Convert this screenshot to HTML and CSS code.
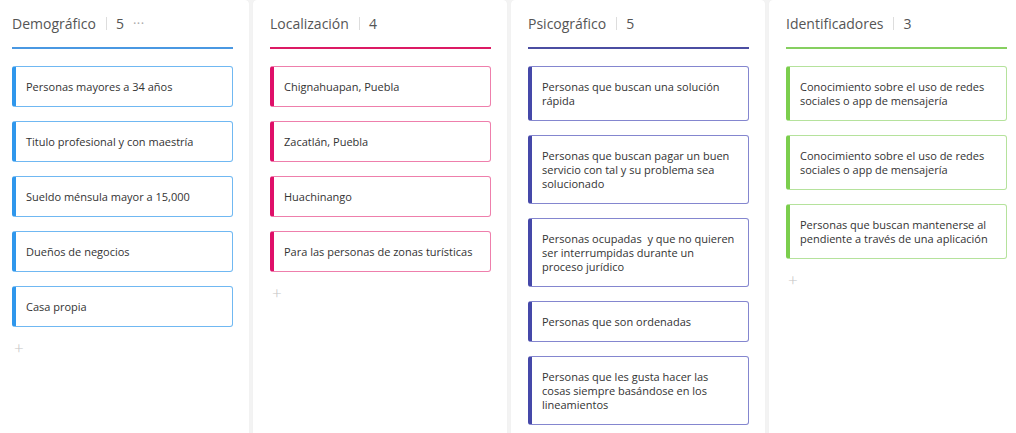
FILE: index.html
```html
<!DOCTYPE html>
<html lang="es">
<head>
<meta charset="utf-8">
<link rel="stylesheet" href="styles.css">
</head>
<body>
<div class="board">
  <section class="col blue">
    <header class="col-head"><span class="title">Demográfico</span><span class="sep"></span><span class="count">5</span><span class="dots">···</span></header>
    <div class="cards">
      <div class="card">Personas mayores a 34 años</div>
      <div class="card">Titulo profesional y con maestría</div>
      <div class="card">Sueldo ménsula mayor a 15,000</div>
      <div class="card">Dueños de negocios</div>
      <div class="card">Casa propia</div>
    </div>
    <div class="add">+</div>
  </section>
  <section class="col pink">
    <header class="col-head"><span class="title">Localización</span><span class="sep"></span><span class="count">4</span></header>
    <div class="cards">
      <div class="card">Chignahuapan, Puebla</div>
      <div class="card">Zacatlán, Puebla</div>
      <div class="card">Huachinango</div>
      <div class="card">Para las personas de zonas turísticas</div>
    </div>
    <div class="add">+</div>
  </section>
  <section class="col indigo">
    <header class="col-head"><span class="title">Psicográfico</span><span class="sep"></span><span class="count">5</span></header>
    <div class="cards">
      <div class="card">Personas que buscan una solución rápida</div>
      <div class="card">Personas que buscan pagar un buen servicio con tal y su problema sea solucionado</div>
      <div class="card">Personas ocupadas&nbsp; y que no quieren ser interrumpidas durante un proceso jurídico</div>
      <div class="card">Personas que son ordenadas</div>
      <div class="card">Personas que les gusta hacer las cosas siempre basándose en los lineamientos</div>
    </div>
  </section>
  <section class="col green">
    <header class="col-head"><span class="title">Identificadores</span><span class="sep"></span><span class="count">3</span></header>
    <div class="cards">
      <div class="card">Conocimiento sobre el uso de redes sociales o app de mensajería</div>
      <div class="card">Conocimiento sobre el uso de redes sociales o app de mensajería</div>
      <div class="card">Personas que buscan mantenerse al pendiente a través de una aplicación</div>
    </div>
    <div class="add">+</div>
  </section>
</div>
</body>
</html>
```

FILE: styles.css
```css
* { box-sizing: border-box; }
html, body {
  margin: 0;
  padding: 0;
  height: 100%;
  overflow: hidden;
  background: #f3f3f3;
  font-family: "Open Sans", "Noto Sans", sans-serif;
}
.board {
  display: flex;
  gap: 4px;
  margin-left: -5px;
  height: 100%;
}
.col {
  flex: 0 0 254px;
  background: #fff;
  border-radius: 4px 4px 0 0;
  padding: 0 16px 0 17px;
  box-shadow: 0 0 1px rgba(0,0,0,0.06);
}
.col-head {
  height: 49px;
  display: flex;
  align-items: center;
  padding-bottom: 1px;
  border-bottom: 2px solid;
  color: #555;
  font-size: 14px;
}
.title { color: #555; }
.sep {
  width: 1px;
  height: 13px;
  background: #ddd;
  margin: 0 9px 0 10px;
}
.count { color: #555; }
.dots {
  color: #aaa;
  font-size: 13px;
  margin-left: 9px;
  letter-spacing: 0.5px;
}
.cards {
  display: flex;
  flex-direction: column;
  gap: 14px;
  margin-top: 17px;
}
.card {
  border: 1px solid;
  border-left-width: 4px;
  border-radius: 3px;
  padding: 12.5px 10px;
  font-size: 11px;
  line-height: 14px;
  color: #333;
  background: #fff;
}
.add {
  margin-top: 13px;
  padding-left: 2px;
  color: #c4c4c4;
  font-size: 17px;
  font-weight: 300;
  line-height: 16px;
}
.blue .col-head { border-color: #4a98e2; }
.blue .card { border-color: #70b8f2; border-left-color: #2f97ec; }
.pink .col-head { border-color: #dc1a64; }
.pink .card { border-color: #ee7fac; border-left-color: #df0f69; }
.indigo .col-head { border-color: #4b4ea2; }
.indigo .card { border-color: #8486cf; border-left-color: #4548a9; }
.green .col-head { border-color: #86cf60; }
.green .card { border-color: #b5e29c; border-left-color: #7bce4d; }
```
